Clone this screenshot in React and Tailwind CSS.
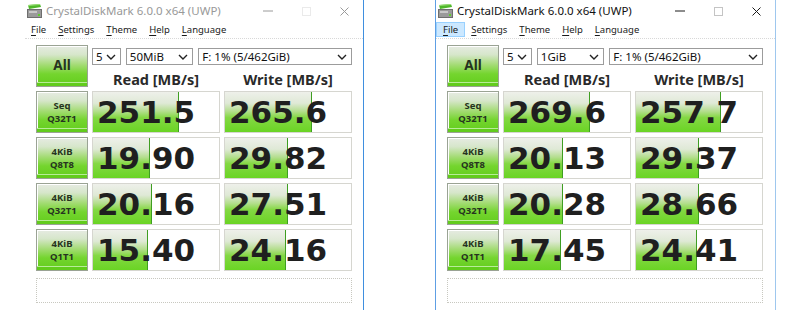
const UI = { fontFamily: '"Noto Sans", "Open Sans", sans-serif' };
const NUM = { fontFamily: '"DejaVu Sans", Verdana, sans-serif' };

const WINDOWS = [
  {
    active: false,
    size: "50MiB",
    rows: [
      { a: "Seq", b: "Q32T1", read: "251.5", rf: 86, write: "265.6", wf: 87 },
      { a: "4KiB", b: "Q8T8", read: "19.90", rf: 57, write: "29.82", wf: 63 },
      { a: "4KiB", b: "Q32T1", read: "20.16", rf: 59, write: "27.51", wf: 63 },
      { a: "4KiB", b: "Q1T1", read: "15.40", rf: 55, write: "24.16", wf: 61 },
    ],
  },
  {
    active: true,
    size: "1GiB",
    rows: [
      { a: "Seq", b: "Q32T1", read: "269.6", rf: 86, write: "257.7", wf: 85 },
      { a: "4KiB", b: "Q8T8", read: "20.13", rf: 59, write: "29.37", wf: 63 },
      { a: "4KiB", b: "Q32T1", read: "20.28", rf: 59, write: "28.66", wf: 63 },
      { a: "4KiB", b: "Q1T1", read: "17.45", rf: 57, write: "24.41", wf: 61 },
    ],
  },
];

const MENU = ["File", "Settings", "Theme", "Help", "Language"];

function AppIcon() {
  return (
    <svg width="15" height="14" viewBox="0 0 15 14">
      <polygon points="1,1 13,0 14,3 2,5" fill="#4fb82a" />
      <polygon points="1,1 13,0 13,1 1,2" fill="#9ee07a" />
      <rect x="0.5" y="5.5" width="14" height="8" fill="#9a9a9a" stroke="#6e6e6e" />
      <rect x="2" y="7" width="8" height="2" fill="#c8c8c8" />
      <rect x="11" y="10" width="2" height="2" fill="#5ed12a" />
    </svg>
  );
}

function Chevron() {
  return (
    <svg width="10" height="6" viewBox="0 0 10 6" className="shrink-0">
      <path d="M1 1 L5 5 L9 1" fill="none" stroke="#222" strokeWidth="1.4" />
    </svg>
  );
}

function Select({ label, w }) {
  return (
    <div
      className={`${w} h-[17px] border border-[#9c9c9c] bg-white flex items-center justify-between pl-[3px] pr-[4px] text-[11.5px] text-[#111] leading-none`}
    >
      <span>{label}</span>
      <Chevron />
    </div>
  );
}

function GreenButton({ children }) {
  return (
    <div className="h-[42px] border border-[#9aa394] bg-[linear-gradient(to_bottom,#e6ebe2_0%,#d6e6ca_22%,#a6dc78_46%,#74d52e_70%,#62cc1c_100%)] shadow-[inset_0_-3px_0_#62cc1c,inset_0_-4px_0_#b8ec98,inset_1px_1px_0_#ffffff] flex flex-col items-center justify-center text-[#263320] font-bold">
      {children}
    </div>
  );
}

function ValueBox({ value, fill }) {
  return (
    <div className="relative h-[42px] border border-[#d6d6d0] bg-white overflow-hidden">
      <div
        className="absolute left-0 top-0 bottom-0 border-r border-[#3f9e22] bg-[linear-gradient(to_bottom,#eef0ea_0%,#dfe9d6_28%,#b4de8e_48%,#84d844_64%,#6ad424_100%)]"
        style={{ width: fill }}
      />
      <div
        className="relative h-full flex items-center pl-[4px] text-[31px] font-bold leading-none text-[#1f1f1f]"
        style={NUM}
      >
        {value}
      </div>
    </div>
  );
}

function CaptionButtons({ active }) {
  const c = active ? "#1a1a1a" : "#9a9a9a";
  return (
    <div className="ml-auto flex h-full">
      <div className="w-[38px] flex items-center justify-center">
        <svg width="10" height="2" viewBox="0 0 10 2">
          <line x1="0" y1="1" x2="10" y2="1" stroke={c} strokeWidth="1" />
        </svg>
      </div>
      <div className="w-[38px] flex items-center justify-center">
        <svg width="9" height="9" viewBox="0 0 9 9">
          <rect
            x="0.5"
            y="0.5"
            width="8"
            height="8"
            fill="none"
            stroke={active ? "#c4c4c4" : "#d4d4d4"}
            strokeDasharray={active ? "none" : "1 1"}
          />
        </svg>
      </div>
      <div className="w-[38px] flex items-center justify-center">
        <svg width="9" height="9" viewBox="0 0 9 9">
          <path d="M0.5 0.5 L8.5 8.5 M8.5 0.5 L0.5 8.5" stroke={c} strokeWidth="1" />
        </svg>
      </div>
    </div>
  );
}

function DiskMarkWindow({ win, className }) {
  return (
    <div className={`h-[310px] bg-white flex flex-col ${className}`} style={UI}>
      <div className="h-[22px] flex items-center">
        <div className="ml-[2px] mt-[-1px]">
          <AppIcon />
        </div>
        <span
          className={`ml-[4px] text-[11.5px] leading-none ${win.active ? "text-[#111]" : "text-[#999]"}`}
        >
          CrystalDiskMark 6.0.0 x64 (UWP)
        </span>
        <CaptionButtons active={win.active} />
      </div>

      <div className="h-[17px] flex items-start border-b border-dotted border-[#d8d8d8]">
        {MENU.map((m, i) => (
          <div
            key={m}
            className={`h-[15px] flex items-center px-[6px] text-[9.5px] leading-none text-[#1a1a1a] ${
              i === 0 && win.active ? "bg-[#cce8ff] border border-[#99d1ff] px-[5px]" : ""
            }`}
          >
            <span className="underline decoration-[0.5px] underline-offset-[1.5px]">{m[0]}</span>
            {m.slice(1)}
          </div>
        ))}
      </div>

      <div className="pl-[11px] pt-[6px]">
        <div className="grid grid-cols-[52px_128px_128px] gap-[4px]">
          <GreenButton>
            <span className="text-[13.5px] leading-none">All</span>
          </GreenButton>
          <div className="col-span-2 flex flex-col">
            <div className="mt-[3px] flex gap-[5px]">
              <Select label="5" w="w-[29px]" />
              <Select label={win.size} w="w-[68px]" />
              <Select label="F: 1% (5/462GiB)" w="w-[155px]" />
            </div>
            <div className="grid grid-cols-2 gap-[4px] pt-[7px] text-[14.5px] font-bold leading-none text-[#2a2a2a]">
              <div className="text-center">Read [MB/s]</div>
              <div className="text-center">Write [MB/s]</div>
            </div>
          </div>

          {win.rows.map((r) => (
            <div key={r.b + r.read} className="contents">
              <GreenButton>
                <div className="flex flex-col items-center text-[9.5px] leading-[13px]">
                  <span>{r.a}</span>
                  <span>{r.b}</span>
                </div>
              </GreenButton>
              <ValueBox value={r.read} fill={r.rf} />
              <ValueBox value={r.write} fill={r.wf} />
            </div>
          ))}
        </div>
        <div className="mt-[7px] w-[316px] h-[25px] border border-dotted border-[#c8c8c0] bg-white" />
      </div>
    </div>
  );
}

export default function App() {
  return (
    <div className="w-[800px] h-[310px] bg-white flex overflow-hidden">
      <DiskMarkWindow win={WINDOWS[0]} className="ml-[25px] w-[339px] border-r border-[#3f8fdf]" />
      <DiskMarkWindow
        win={WINDOWS[1]}
        className="ml-[71px] w-[341px] border-x border-l-[#5e9fe4] border-r-[#9ec7ee]"
      />
    </div>
  );
}
